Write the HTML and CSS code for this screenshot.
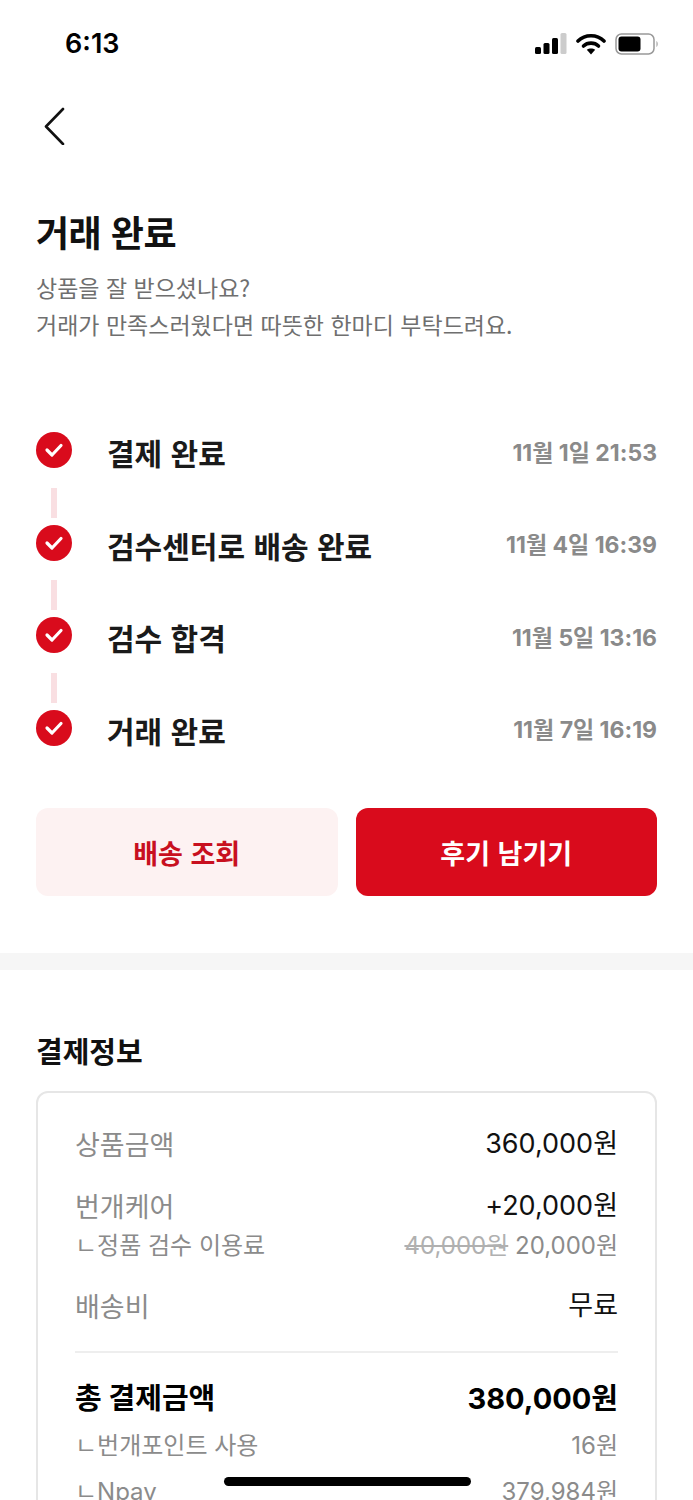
FILE: index.html
```html
<!DOCTYPE html>
<html lang="ko">
<head>
    <meta charset="UTF-8">
    <meta name="viewport" content="width=device-width, initial-scale=1.0">
    <title>거래 완료</title>
    <link rel="stylesheet" href="styles.css">
</head>
<body>

<div class="status-bar">
    <span class="clock">6:13</span>
    <div class="status-icons">
        <svg width="32" height="22" viewBox="0 0 32 22">
            <rect x="0" y="14" width="6" height="7" rx="1.5" fill="#000"/>
            <rect x="8.5" y="10" width="6" height="11" rx="1.5" fill="#000"/>
            <rect x="17" y="5" width="6" height="16" rx="1.5" fill="#000"/>
            <rect x="25.500" y="0" width="6" height="21" rx="1.5" fill="#ccc"/>
        </svg>
        <svg width="30" height="22" viewBox="0 0 30 22">
            <path d="M2 8 C9 1 21 1 28 8" fill="none" stroke="#000" stroke-width="3.600" stroke-linecap="round"/>
            <path d="M7.500 13 C11.500 9.200 18.500 9.200 22.500 13" fill="none" stroke="#000" stroke-width="3.600" stroke-linecap="round"/>
            <path d="M15 21.500 L10.800 16.800 C13 15 17 15 19.200 16.800 Z" fill="#000"/>
        </svg>
        <svg width="44" height="22" viewBox="0 0 44 22">
            <rect x="1" y="1" width="38" height="20" rx="5.500" fill="none" stroke="#999" stroke-width="1.500"/>
            <rect x="3.500" y="3.500" width="22" height="15" rx="3" fill="#000"/>
            <path d="M41.500 8 C43 9 43 13 41.500 14 Z" fill="#999"/>
        </svg>
    </div>
</div>

<header class="topbar">
    <a class="back" href="#">
        <svg width="22" height="38" viewBox="0 0 22 38">
            <path d="M20 2 L3 19.500 L20 37" fill="none" stroke="#111" stroke-width="2.600" stroke-linecap="round" stroke-linejoin="round"/>
        </svg>
    </a>
</header>

<section class="intro">
    <h1>거래 완료</h1>
    <p>상품을 잘 받으셨나요?<br>거래가 만족스러웠다면 따뜻한 한마디 부탁드려요.</p>
</section>

<ul class="steps">
    <li class="step">
        <span class="check"><svg width="20" height="16" viewBox="0 0 20 16"><path d="M3 8 L8 13 L17 3.500" fill="none" stroke="#fff" stroke-width="3.200" stroke-linecap="round" stroke-linejoin="round"/></svg></span>
        <span class="step-name">결제 완료</span>
        <span class="step-date">11월 1일 21:53</span>
    </li>
    <li class="step">
        <span class="check"><svg width="20" height="16" viewBox="0 0 20 16"><path d="M3 8 L8 13 L17 3.500" fill="none" stroke="#fff" stroke-width="3.200" stroke-linecap="round" stroke-linejoin="round"/></svg></span>
        <span class="step-name">검수센터로 배송 완료</span>
        <span class="step-date">11월 4일 16:39</span>
    </li>
    <li class="step">
        <span class="check"><svg width="20" height="16" viewBox="0 0 20 16"><path d="M3 8 L8 13 L17 3.500" fill="none" stroke="#fff" stroke-width="3.200" stroke-linecap="round" stroke-linejoin="round"/></svg></span>
        <span class="step-name">검수 합격</span>
        <span class="step-date">11월 5일 13:16</span>
    </li>
    <li class="step">
        <span class="check"><svg width="20" height="16" viewBox="0 0 20 16"><path d="M3 8 L8 13 L17 3.500" fill="none" stroke="#fff" stroke-width="3.200" stroke-linecap="round" stroke-linejoin="round"/></svg></span>
        <span class="step-name">거래 완료</span>
        <span class="step-date">11월 7일 16:19</span>
    </li>
</ul>

<div class="actions">
    <a class="btn btn-soft" href="#">배송 조회</a>
    <a class="btn btn-red" href="#">후기 남기기</a>
</div>

<div class="divider"></div>

<section class="payment">
    <h2>결제정보</h2>
    <div class="card">
        <div class="row first"><span class="label">상품금액</span><span class="value">360,000원</span></div>
        <div class="row"><span class="label">번개케어</span><span class="value">+20,000원</span></div>
        <div class="row sub tight"><span>ㄴ정품 검수 이용료</span><span><s>40,000원</s> 20,000원</span></div>
        <div class="row"><span class="label">배송비</span><span class="value">무료</span></div>
        <hr>
        <div class="row total"><span>총 결제금액</span><span>380,000원</span></div>
        <div class="row sub"><span>ㄴ번개포인트 사용</span><span>16원</span></div>
        <div class="row sub"><span>ㄴNpay</span><span>379,984원</span></div>
    </div>
</section>

<div class="home-indicator"></div>

</body>
</html>
```

FILE: styles.css
```css
* {
    margin: 0;
    padding: 0;
    box-sizing: border-box;
}

html, body {
    width: 100%;
    height: 1500px;
    overflow: hidden;
    background-color: #fff;
    color: #111;
    font-family: "Noto Sans CJK KR", "Inter", sans-serif;
}

body {
    position: relative;
}

a {
    text-decoration: none;
}

.status-bar {
    height: 88px;
    padding: 33px 34px 0 65px;
    display: flex;
    justify-content: space-between;
    align-items: flex-start;
}

.clock {
    font-family: "Inter", sans-serif;
    font-size: 27px;
    font-weight: 600;
    line-height: 22px;
    color: #000;
}

.status-icons {
    display: flex;
    gap: 9px;
}

.topbar {
    height: 60px;
    padding: 19px 0 0 43px;
}

.back {
    display: block;
    width: 22px;
}

.intro {
    padding: 0 36px;
    margin-top: 57px;
}

h1 {
    font-size: 36px;
    font-weight: 700;
    line-height: 52px;
    letter-spacing: -0.5px;
}

.intro p {
    margin-top: 12px;
    font-size: 23px;
    line-height: 37px;
    color: #6f6f6f;
}

.steps {
    list-style: none;
    margin-top: 63px;
    padding: 0 36px;
}

.step {
    position: relative;
    height: 92.500px;
    display: flex;
    align-items: center;
}

.step + .step::before {
    content: "";
    position: absolute;
    left: 15px;
    top: -11px;
    width: 6px;
    height: 30px;
    background-color: #f9dfe2;
}

.check {
    width: 36px;
    height: 36px;
    margin-top: -4px;
    border-radius: 50%;
    background-color: #d90b1c;
    display: flex;
    align-items: center;
    justify-content: center;
}

.step-name {
    margin-left: 35px;
    font-size: 30px;
    font-weight: 700;
    color: #1a1a1a;
}

.step-date {
    margin-left: auto;
    margin-top: -3px;
    font-family: "Inter", "Noto Sans CJK KR", sans-serif;
    font-size: 23px;
    font-weight: 700;
    color: #8a8a8a;
}

.actions {
    margin-top: 32px;
    padding: 0 36px;
    display: flex;
    gap: 18px;
}

.btn {
    flex: 1;
    height: 88px;
    border-radius: 12px;
    display: flex;
    align-items: center;
    justify-content: center;
    font-size: 27px;
    font-weight: 700;
}

.btn-soft {
    background-color: #fdf2f2;
    color: #c8101f;
}

.btn-red {
    background-color: #d90b1c;
    color: #fff;
}

.divider {
    height: 17px;
    margin-top: 57px;
    background-color: #f6f6f6;
}

.payment {
    padding: 0 36px;
    margin-top: 58px;
}

h2 {
    font-size: 29px;
    font-weight: 700;
    line-height: 44px;
    color: #111;
}

.card {
    margin-top: 19px;
    padding: 32px 37px;
    border: 2px solid #e6e6e6;
    border-radius: 12px;
    height: 600px;
}

.row {
    display: flex;
    justify-content: space-between;
    align-items: center;
    margin-top: 24px;
    font-family: "Inter", "Noto Sans CJK KR", sans-serif;
}

.row.first {
    margin-top: 0;
}

.label {
    font-family: "Noto Sans CJK KR", sans-serif;
    font-size: 27px;
    line-height: 38px;
    color: #8b8b8b;
}

.value {
    font-size: 27px;
    line-height: 38px;
    color: #111;
}

.row.sub {
    font-size: 24px;
    line-height: 34px;
    color: #8b8b8b;
}

.row.tight {
    margin-top: 4px;
}

s {
    color: #b0b0b0;
}

hr {
    border: none;
    height: 2px;
    margin-top: 26px;
    background-color: #eee;
}

.row.total {
    margin-top: 26px;
    font-size: 29px;
    font-weight: 700;
    line-height: 40px;
    color: #000;
}

.row.total + .row.sub {
    margin-top: 10px;
}

.row.total ~ .row.sub + .row.sub {
    margin-top: 12px;
}

.home-indicator {
    position: absolute;
    left: 224px;
    top: 1477px;
    width: 247px;
    height: 9px;
    border-radius: 5px;
    background-color: #000;
}
```
